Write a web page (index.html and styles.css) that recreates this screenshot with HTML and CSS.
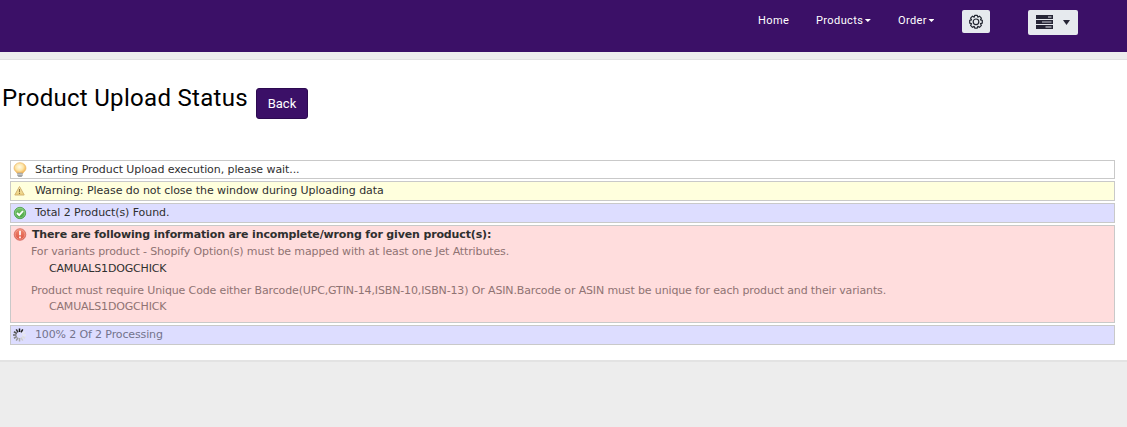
FILE: index.html
```html
<!DOCTYPE html>
<html lang="en">
<head>
<meta charset="utf-8">
<title>Product Upload Status</title>
<link rel="stylesheet" href="styles.css">
</head>
<body>
<header class="navbar">
  <a class="nav-link nav-home">Home</a>
  <a class="nav-link nav-products">Products<i class="caret"></i></a>
  <a class="nav-link nav-order">Order<i class="caret"></i></a>
  <button class="tool tool-gear" aria-label="Settings">
    <svg width="16" height="16" viewBox="0 0 16 16" fill="none" stroke="#222631" stroke-width="1.2" stroke-linejoin="round"><path d="M6.700 1.300h2.600l.5 1.800 1.700-.9 1.900 1.900-.9 1.700 1.800.5v2.900l-1.800.5.9 1.700-1.900 1.900-1.700-.9-.5 1.800H6.700l-.5-1.800-1.700.9-1.900-1.900.9-1.700-1.800-.5V6.300l1.800-.5-.9-1.700 1.900-1.900 1.700.9z"/><circle cx="8" cy="7.800" r="2.800"/></svg>
  </button>
  <button class="tool tool-menu" aria-label="Account menu">
    <svg width="17" height="14" viewBox="0 0 17 14"><path fill="#262636" d="M0 0h17v4H0zM0 5h17v4H0zM0 10h17v4H0z"/><path fill="#e6eaee" d="M12 1.500h3.500v1H12zM9.500 11.500h6v1h-6z"/><path fill="#9a9ca6" d="M6 6.300h9.500v1.400H6z"/></svg>
    <svg width="7" height="5" viewBox="0 0 7 5"><path fill="#262636" d="M0 0h7L3.500 5z"/></svg>
  </button>
</header>
<main class="panel">
  <div class="heading">
    <h1 class="title">Product Upload Status</h1>
    <button class="back">Back</button>
  </div>
  <ul class="log">
    <li class="row row-start">
      <svg class="icon" width="16" height="16" viewBox="0 0 16 16"><defs><radialGradient id="bulb" cx=".45" cy=".4" r=".65"><stop offset="0" stop-color="#fffbe8"/><stop offset=".5" stop-color="#fde5a8"/><stop offset="1" stop-color="#f0a63a"/></radialGradient></defs><path fill="url(#bulb)" stroke="#edb968" stroke-width=".7" d="M8 .7a6 5.500 0 0 0-6 5.500c0 2.500 2.600 3.500 3.100 5.200h5.800c.5-1.700 3.100-2.700 3.100-5.200A6 5.500 0 0 0 8 .7z"/><path fill="#a2a4a5" d="M5.300 10.800h5.400v2.800L9.500 15h-3l-1.200-1.400z"/><path stroke="#dedede" stroke-width=".7" d="M5.300 12.300h5.400"/></svg>
      <span class="text text-start">Starting Product Upload execution, please wait...</span>
    </li>
    <li class="row row-warn">
      <svg class="icon" width="16" height="16" viewBox="0 0 16 16"><defs><linearGradient id="warn" x2="0" y2="1"><stop offset="0" stop-color="#faeebe"/><stop offset="1" stop-color="#edd07a"/></linearGradient></defs><path fill="url(#warn)" stroke="#d4b470" stroke-linejoin="round" d="M7.500 3.500l4.700 8.500H2.800z"/><path stroke="#8d743e" stroke-width="1.100" d="M7.500 6v3.200M7.500 10v1"/></svg>
      <span class="text text-warn">Warning: Please do not close the window during Uploading data</span>
    </li>
    <li class="row row-info">
      <svg class="icon" width="16" height="16" viewBox="0 0 16 16"><defs><linearGradient id="ok" x2="0" y2="1"><stop offset="0" stop-color="#79c46b"/><stop offset="1" stop-color="#43a33d"/></linearGradient></defs><circle cx="8" cy="8" r="5.700" fill="url(#ok)" stroke="#419b40" stroke-width=".8"/><circle cx="8" cy="8" r="4.800" fill="none" stroke="#9dd594" stroke-width=".6"/><path fill="none" stroke="#fff" stroke-width="1.800" d="M5 8l2.200 2.200L11 6"/></svg>
      <span class="text text-total">Total 2 Product(s) Found.</span>
    </li>
    <li class="row row-error">
      <svg class="icon" width="16" height="16" viewBox="0 0 16 16"><defs><linearGradient id="err" x2="0" y2="1"><stop offset="0" stop-color="#f08a70"/><stop offset="1" stop-color="#dd5241"/></linearGradient></defs><circle cx="8" cy="7.500" r="5.800" fill="url(#err)" stroke="#d3665c" stroke-width=".8"/><circle cx="8" cy="7.500" r="4.800" fill="none" stroke="#f6aa98" stroke-width=".6"/><path stroke="#fff" stroke-width="1.700" d="M8 3.800v4.500M8 9.500v1.700"/></svg>
      <div class="details">
        <strong class="summary">There are following information are incomplete/wrong for given product(s):</strong>
        <p class="reason">For variants product - Shopify Option(s) must be mapped with at least one Jet Attributes.</p>
        <p class="sku sku-dark">CAMUALS1DOGCHICK</p>
        <p class="reason reason-code">Product must require Unique Code either Barcode(UPC,GTIN-14,ISBN-10,ISBN-13) Or ASIN.Barcode or ASIN must be unique for each product and their variants.</p>
        <p class="sku sku-last">CAMUALS1DOGCHICK</p>
      </div>
    </li>
    <li class="row row-info row-progress">
      <svg class="icon" width="16" height="16" viewBox="0 0 16 16" stroke-width="1.500"><g transform="translate(7.500 8)"><path stroke="#111" d="M0-3V-6.500"/><path stroke="#222" transform="rotate(30)" d="M0-3V-6.500"/><path stroke="#e8e8f2" transform="rotate(60)" d="M0-3V-6.500"/><path stroke="#e8e8ee" transform="rotate(90)" d="M0-3V-6.500"/><path stroke="#ddd" transform="rotate(120)" d="M0-3V-6.500"/><path stroke="#ccc" transform="rotate(150)" d="M0-3V-6.500"/><path stroke="#aaa" transform="rotate(180)" d="M0-3V-6.500"/><path stroke="#999" transform="rotate(210)" d="M0-3V-6.500"/><path stroke="#888" transform="rotate(240)" d="M0-3V-6.500"/><path stroke="#666" transform="rotate(270)" d="M0-3V-6.500"/><path stroke="#555" transform="rotate(300)" d="M0-3V-6.500"/><path stroke="#333" transform="rotate(330)" d="M0-3V-6.500"/></g></svg>
      <span class="text">100% 2 Of 2 Processing</span>
    </li>
  </ul>
</main>
</body>
</html>
```
FILE: styles.css
```css
* { box-sizing: border-box; }
body { margin: 0; height: 427px; overflow: hidden; background: #ededed; font-family: "DejaVu Sans", sans-serif; font-size: 11px; color: #2f2f2f; }
.navbar { display: flex; align-items: flex-start; height: 52px; padding: 10px 49px 0 0; justify-content: flex-end; background: #3b1067; }
.nav-link { display: flex; align-items: center; height: 20px; margin-top: 1px; font: 11px/20px Roboto, sans-serif; letter-spacing: .4px; color: #fff; }
.nav-home { width: 58px; }
.nav-products { width: 82px; }
.nav-order { width: 64px; }
.caret { width: 6px; height: 3px; margin: -1px 0 0 1.5px; background: #fff; clip-path: polygon(0 0, 100% 0, 50% 100%); }
.tool { display: flex; align-items: center; justify-content: center; padding: 0; border: 0; border-radius: 2px; background: #e6eaee; }
.tool-gear { width: 28px; height: 23px; margin-right: 38px; }
.tool-menu { width: 50px; height: 25px; padding: 0 0 1px 0; gap: 10px; }
.panel { height: 303px; margin-top: 7px; border-top: 1px solid #e1e1e1; border-bottom: 2px solid #e3e3e3; background: #fff; }
.heading { display: flex; align-items: flex-start; height: 100px; padding: 23px 0 0 2px; }
.title { width: 254px; margin: 0; font: 24px/30px Roboto, sans-serif; letter-spacing: .3px; white-space: nowrap; color: #000; }
.back { width: 52px; height: 31px; margin-top: 5px; padding: 0; border: 1px solid #2c0a50; border-radius: 3px; background: #3b1067; font: 13px/29px Roboto, sans-serif; color: #fff; }
.log { display: grid; grid-template-rows: 19px 20px 20px 98px 20px; gap: 2px; margin: 0; padding: 0 12px 0 10px; list-style: none; letter-spacing: -.135px; }
.row { display: flex; align-items: flex-start; padding-left: 1px; border: 1px solid #c9c9c9; white-space: nowrap; }
.row-warn { background: #ffffdd; }
.row-info { background: #ddddff; }
.row-error { background: #ffdddd; }
.icon { flex: none; margin-top: 1px; }
.text { margin-left: 7px; line-height: 17px; }
.text-start { letter-spacing: -.08px; }
.text-warn { letter-spacing: -.05px; }
.text-total { letter-spacing: -.08px; }
.details { margin-left: 3px; }
.summary { display: block; margin-left: 1px; line-height: 17px; letter-spacing: -.142px; }
.reason { margin: 0; line-height: 17px; color: #8f7373; letter-spacing: -.125px; }
.reason-code { letter-spacing: -.136px; }
.sku { margin: 0 0 5px 18px; line-height: 17px; color: #8f7373; letter-spacing: -.18px; }
.sku-dark { color: #2f2f2f; }
.sku-last { margin-top: -1px; }
.row-progress { color: #73738c; }
```
